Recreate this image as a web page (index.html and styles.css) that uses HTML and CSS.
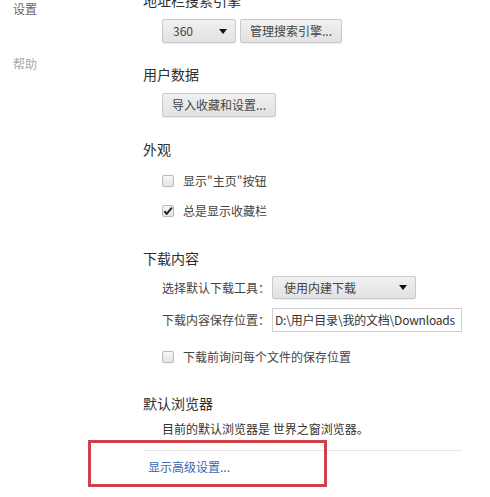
FILE: index.html
```html
<!DOCTYPE html>
<html lang="zh-CN">
<head>
<meta charset="utf-8">
<title>设置</title>
<link rel="stylesheet" href="styles.css">
</head>
<body>
<div class="page">
  <nav class="nav">
    <div class="nav-item nav-active">设置</div>
    <div class="nav-item nav-muted">帮助</div>
  </nav>
  <main class="main">
    <h3 class="sec-title first">地址栏搜索引擎</h3>
    <div class="sub row r-search">
      <span class="select sel-360"><span class="sel-text">360</span><svg class="arrow" width="8" height="5" viewBox="0 0 8 5"><path d="M0 0H8L4 5Z" fill="#111"/></svg></span>
      <button class="btn btn-manage">管理搜索引擎...</button>
    </div>

    <h3 class="sec-title t-user">用户数据</h3>
    <div class="sub row r-import">
      <button class="btn btn-import">导入收藏和设置...</button>
    </div>

    <h3 class="sec-title t-look">外观</h3>
    <label class="sub check-row c1"><span class="box"></span><span class="ctext">显示"主页"按钮</span></label>
    <label class="sub check-row c2"><span class="box"><svg width="11" height="10" viewBox="0 0 11 10"><path d="M1.5 5.2L4 8.2L9.8 1.2" fill="none" stroke="#222" stroke-width="2.2" stroke-linejoin="round"/></svg></span><span class="ctext">总是显示收藏栏</span></label>

    <h3 class="sec-title t-down">下载内容</h3>
    <div class="sub row r-tool">
      <span class="lbl">选择默认下载工具：</span>
      <span class="select sel-dl"><span class="sel-text">使用内建下载</span><svg class="arrow" width="8" height="5" viewBox="0 0 8 5"><path d="M0 0H8L4 5Z" fill="#111"/></svg></span>
    </div>
    <div class="sub row r-path">
      <span class="lbl">下载内容保存位置：</span>
      <span class="input">D:\用户目录\我的文档\Downloads</span>
    </div>
    <label class="sub check-row c3"><span class="box"></span><span class="ctext">下载前询问每个文件的保存位置</span></label>

    <h3 class="sec-title t-browser">默认浏览器</h3>
    <p class="sub info">目前的默认浏览器是 世界之窗浏览器。</p>

    <div class="sep"></div>
    <a class="adv-link">显示高级设置...</a>
  </main>
  <div class="highlight"></div>
</div>
</body>
</html>
```

FILE: styles.css
```css
html, body {
  margin: 0;
  padding: 0;
  background: #ffffff;
}

body {
  font-family: "Noto Sans CJK SC", "Noto Sans", sans-serif;
  color: #333;
  width: 490px;
  height: 497px;
  overflow: hidden;
}

.page {
  position: relative;
  display: flex;
  width: 490px;
  height: 497px;
}

.nav {
  width: 143px;
  flex: none;
  padding-left: 13px;
  box-sizing: border-box;
  display: flex;
  flex-direction: column;
}

.nav-item {
  font-size: 12px;
  line-height: 16px;
}

.nav-active {
  color: #666;
  margin-top: 1px;
}

.nav-muted {
  color: #a8a8a8;
  margin-top: 39px;
}

.main {
  flex: 1;
  display: flex;
  flex-direction: column;
  align-items: flex-start;
}

.sec-title {
  margin: 0;
  font-weight: normal;
  font-size: 14px;
  line-height: 20px;
  color: #2e2e2e;
}

.first { margin-top: -10px; }
.t-user { margin-top: 21px; }
.t-look { margin-top: 22px; }
.t-down { margin-top: 27px; }
.t-browser { margin-top: 26px; }

.sub {
  margin-left: 19px;
}

.row {
  display: flex;
  align-items: center;
  gap: 4px;
}

.r-search { margin-top: 9px; }
.r-import { margin-top: 9px; }
.r-tool { margin-top: 8px; gap: 0; }
.r-path { margin-top: 9px; gap: 0; }

.btn, .select {
  box-sizing: border-box;
  height: 24px;
  border: 1px solid #c9c9c9;
  border-radius: 2px;
  background: linear-gradient(#f0f0f0, #e2e2e2);
  box-shadow: 0 1px 0 rgba(0,0,0,0.06);
  font-family: inherit;
  font-size: 12px;
  color: #444;
  padding: 0;
  margin: 0;
  line-height: 22px;
}

.btn-manage { width: 102px; }
.btn-import { width: 114px; }

.select {
  display: flex;
  align-items: center;
  justify-content: space-between;
}

.sel-360 {
  width: 74px;
  padding: 0 8px 0 10px;
}

.sel-dl {
  width: 144px;
  height: 23px;
  padding: 0 8px 0 11px;
}

.arrow { display: block; }

.lbl {
  width: 110px;
  font-size: 12px;
  line-height: 16px;
  color: #444;
  flex: none;
}

.input {
  box-sizing: border-box;
  width: 190px;
  height: 24px;
  border: 1px solid #cfcfcf;
  background: #fff;
  font-size: 12px;
  letter-spacing: -0.2px;
  line-height: 22px;
  padding-left: 2px;
  color: #333;
  white-space: nowrap;
  overflow: hidden;
}

.check-row {
  display: flex;
  align-items: center;
  height: 20px;
}

.c1 { margin-top: 12px; }
.c2 { margin-top: 10px; }
.c3 { margin-top: 15px; }

.box {
  box-sizing: border-box;
  width: 12px;
  height: 12px;
  border: 1px solid #b9b9b9;
  border-radius: 2px;
  background: linear-gradient(#f7f7f7, #e4e4e4);
  display: flex;
  align-items: center;
  justify-content: center;
  flex: none;
}

.box svg { display: block; margin-top: -1px; }

.ctext {
  margin-left: 9px;
  font-size: 12px;
  line-height: 16px;
  color: #444;
}

.info {
  margin-top: 8px;
  margin-bottom: 0;
  font-size: 12px;
  line-height: 16px;
  color: #333;
}

.sep {
  margin-top: 13px;
  width: 319px;
  height: 1px;
  background: #e6e6e6;
}

.adv-link {
  margin-top: 8px;
  margin-left: 5px;
  font-size: 12px;
  line-height: 16px;
  color: #3a67b0;
  cursor: pointer;
}

.highlight {
  position: absolute;
  left: 88px;
  top: 440px;
  width: 239px;
  height: 47px;
  box-sizing: border-box;
  border: 3px solid #d2404a;
}
```
